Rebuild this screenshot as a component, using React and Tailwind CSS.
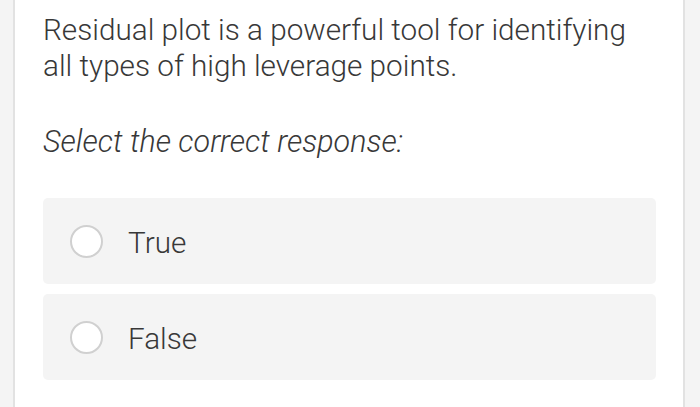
import React from 'react';

const options = ['True', 'False'];

export default function App() {
  return (
    <div className="w-[700px] h-[407px] flex bg-[#f4f4f4] overflow-hidden" style={{ fontFamily: '"Roboto Light", Roboto, "Liberation Sans", sans-serif' }}>
      {/* side gutter */}
      <div className="w-[13px] shrink-0" />
      <div className="w-[672px] shrink-0 bg-white border-x-2 border-[#e2e2e2] pl-[28px] pr-[27px] pt-[12px]">
        <p className="text-[29.7px] leading-[36px] font-light text-[#383838]">
          Residual plot is a powerful tool for identifying all types of high leverage points.
        </p>

        <p className="mt-[40px] text-[30.5px] leading-[36px] font-light italic text-[#383838]">
          Select the correct response:
        </p>

        <div className="mt-[38px] flex flex-col gap-[10px]">
          {options.map((opt) => (
            <div key={opt} className="h-[86px] rounded-[5px] bg-[#f4f4f4] flex items-center pl-[27px]">
              <span className="w-[33px] h-[33px] rounded-full bg-white border-2 border-[#d0d0d0] shrink-0" />
              <span className="ml-[25px] pt-[4px] text-[29.7px] font-light text-[#383838]">{opt}</span>
            </div>
          ))}
        </div>
      </div>
    </div>
  );
}
